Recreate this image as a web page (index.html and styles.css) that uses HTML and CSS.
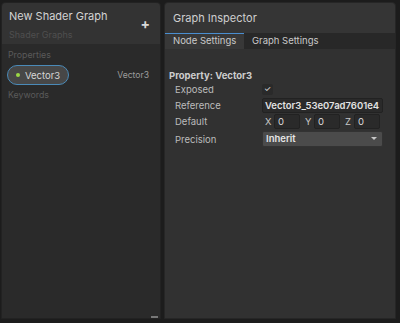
FILE: index.html
```html
<!DOCTYPE html>
<html lang="en">
<head>
  <meta charset="UTF-8">
  <title>Shader Graph</title>
  <link rel="stylesheet" href="styles.css">
</head>
<body>
  <div class="window">
    <div class="blackboard">
      <div class="bb-header">
        <div class="bb-titles">
          <div class="bb-title">New Shader Graph</div>
          <div class="bb-subtitle">Shader Graphs</div>
        </div>
        <span class="add-btn">+</span>
      </div>
      <div class="bb-body">
        <div class="section-label">Properties</div>
        <div class="prop-row">
          <span class="pill"><span class="dot"></span>Vector3</span>
          <span class="prop-type">Vector3</span>
        </div>
        <div class="section-label">Keywords</div>
        <div class="bb-fill"></div>
        <div class="resize"></div>
      </div>
    </div>
    <div class="inspector">
      <div class="insp-header">Graph Inspector</div>
      <div class="tabs">
        <span class="tab active">Node Settings</span>
        <span class="tab">Graph Settings</span>
      </div>
      <div class="insp-body">
        <div class="prop-title">Property: Vector3</div>
        <div class="field">
          <span class="field-label">Exposed</span>
          <span class="checkbox">&#10003;</span>
        </div>
        <div class="field">
          <span class="field-label">Reference</span>
          <span class="textbox">Vector3_53e07ad7601e4</span>
        </div>
        <div class="field">
          <span class="field-label">Default</span>
          <span class="vec">
            <span class="axis">X</span><span class="num">0</span>
            <span class="axis">Y</span><span class="num">0</span>
            <span class="axis">Z</span><span class="num">0</span>
          </span>
        </div>
        <div class="field tall">
          <span class="field-label">Precision</span>
          <span class="dropdown">Inherit<span class="arrow"></span></span>
        </div>
      </div>
    </div>
  </div>
</body>
</html>
```
FILE: styles.css
```css
* {
  box-sizing: border-box;
}

body {
  margin: 0;
  background: #1c1c1c;
  font-family: Inter, "Noto Sans", sans-serif;
  color: #c4c4c4;
  font-size: 9.5px;
}

.window {
  display: flex;
  gap: 3px;
  height: 319px;
  padding: 2px 4px 0 1px;
}

.blackboard {
  width: 160px;
  display: flex;
  flex-direction: column;
  background: #2a2a2a;
  border: 1px solid #222;
  border-radius: 4px 4px 0 0;
}

.bb-header {
  height: 41px;
  background: #333333;
  display: flex;
  align-items: flex-start;
  justify-content: space-between;
  padding: 0 9px 0 7px;
  border-radius: 4px 4px 0 0;
}

.bb-title {
  font-size: 11px;
  color: #d4d4d4;
  margin-top: 6px;
}

.bb-subtitle {
  font-size: 9px;
  color: #4f4f4f;
  margin-top: 6px;
}

.add-btn {
  font-size: 14px;
  font-weight: bold;
  color: #d8d8d8;
  margin-top: 12px;
  margin-right: 1px;
}

.bb-body {
  flex: 1;
  display: flex;
  flex-direction: column;
  padding-top: 4px;
  position: relative;
}

.section-label {
  font-size: 8.8px;
  color: #5a5a5a;
  padding: 0 6px;
  height: 14px;
  line-height: 14px;
}

.prop-row {
  display: flex;
  align-items: center;
  justify-content: space-between;
  padding: 3px 11px 3px 5px;
}

.pill {
  display: flex;
  align-items: center;
  gap: 5px;
  height: 20px;
  padding: 0 8px 0 8px;
  border: 1.5px solid #4a8ab8;
  border-radius: 10px;
  background: #474747;
  color: #d6d6d6;
  font-size: 9.5px;
}

.dot {
  width: 4px;
  height: 4px;
  border-radius: 50%;
  background: #9bd845;
}

.prop-type {
  color: #9c9c9c;
  font-size: 8.6px;
}

.bb-fill {
  flex: 1;
}

.resize {
  position: absolute;
  right: 2px;
  bottom: 0;
  width: 7px;
  height: 2px;
  background: #777;
}

.inspector {
  flex: 1;
  display: flex;
  flex-direction: column;
  background: #313131;
  border: 1px solid #262626;
  border-radius: 4px 4px 0 0;
}

.insp-header {
  height: 30px;
  line-height: 30px;
  background: #353535;
  padding-left: 8px;
  font-size: 11px;
  color: #cfcfcf;
  border-radius: 4px 4px 0 0;
}

.tabs {
  display: flex;
  height: 16px;
  background: #282828;
}

.tab {
  padding: 0 8px;
  line-height: 16px;
  color: #cacaca;
  white-space: nowrap;
}

.tab.active {
  width: 79px;
  background: #383838;
  border-top: 1px solid #4a8ed0;
  line-height: 14px;
}

.insp-body {
  padding: 21px 0 0 4px;
}

.prop-title {
  font-weight: bold;
  color: #cdcdcd;
  height: 11px;
  line-height: 11px;
}

.field {
  display: flex;
  align-items: center;
  height: 16px;
}

.field.tall {
  height: 20px;
}

.field-label {
  width: 93px;
  padding-left: 6px;
  color: #bcbcbc;
}

.checkbox {
  width: 11px;
  height: 11px;
  background: #2a2a2a;
  color: #e0e0e0;
  font-size: 8px;
  line-height: 11px;
  text-align: center;
  border-radius: 2px;
}

.textbox {
  width: 121px;
  height: 15px;
  line-height: 13px;
  background: #2a2a2a;
  border: 1px solid #222;
  border-radius: 2px;
  padding-left: 2px;
  color: #e2e2e2;
  font-weight: 600;
  overflow: hidden;
  white-space: nowrap;
}

.vec {
  display: flex;
  align-items: center;
}

.axis {
  width: 12px;
  padding-left: 3px;
  color: #c8c8c8;
}

.num {
  width: 26px;
  height: 15px;
  line-height: 13px;
  background: #2a2a2a;
  border: 1px solid #222;
  border-radius: 2px;
  padding-left: 3px;
  margin-right: 2px;
  color: #dcdcdc;
}

.dropdown {
  position: relative;
  width: 121px;
  height: 16px;
  line-height: 14px;
  background: #4b4b4b;
  border: 1px solid #333;
  border-radius: 2px;
  padding-left: 3px;
  color: #e6e6e6;
  font-weight: 600;
}

.arrow {
  position: absolute;
  right: 5px;
  top: 5px;
  border-left: 3px solid transparent;
  border-right: 3px solid transparent;
  border-top: 3.5px solid #c8c8c8;
}
```
